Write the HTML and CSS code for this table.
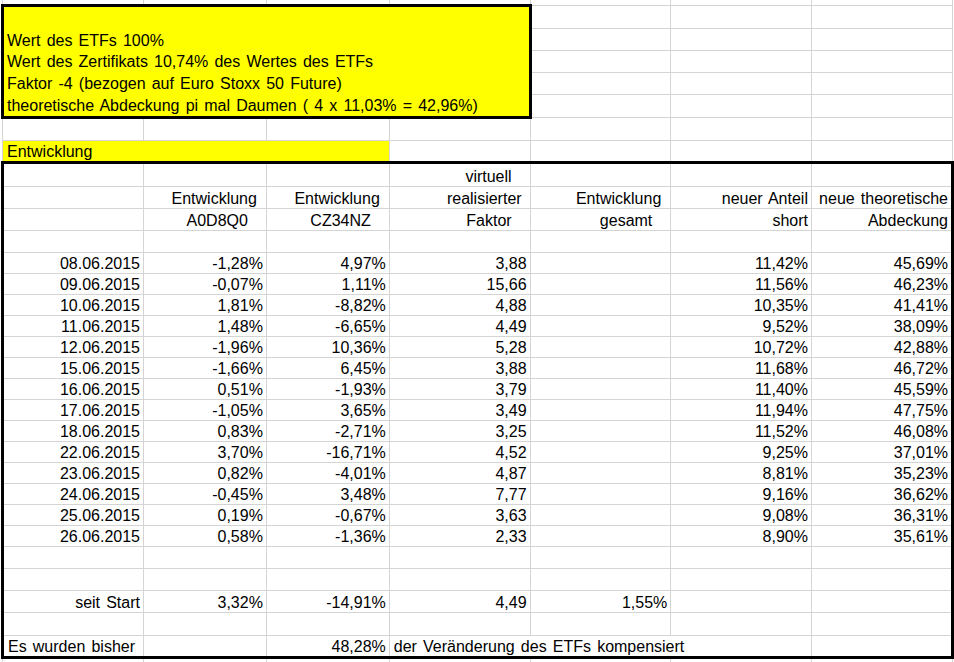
FILE: index.html
```html
<!DOCTYPE html>
<html lang="de">
<head>
<meta charset="utf-8">
<title>Entwicklung</title>
<link rel="stylesheet" href="styles.css">
</head>
<body>
<table class="sheet">
  <colgroup>
    <col class="c-a"><col class="c-b"><col class="c-b"><col class="c-w"><col class="c-w"><col class="c-w"><col class="c-w">
  </colgroup>
  <tbody class="upper">
    <tr class="r0"><td></td><td></td><td></td><td></td><td></td><td></td><td></td></tr>
    <tr class="h23">
      <td class="box" colspan="4" rowspan="5">
        <div class="ln">Wert des ETFs 100%</div>
        <div class="ln">Wert des Zertifikats 10,74% des Wertes des ETFs</div>
        <div class="ln">Faktor -4 (bezogen auf Euro Stoxx 50 Future)</div>
        <div class="ln">theoretische Abdeckung pi mal Daumen ( 4 x 11,03% = 42,96%)</div>
      </td>
      <td></td><td></td><td></td>
    </tr>
    <tr class="h22"><td></td><td></td><td></td></tr>
    <tr class="h22"><td></td><td></td><td></td></tr>
    <tr class="h22"><td></td><td></td><td></td></tr>
    <tr class="h23"><td></td><td></td><td></td></tr>
    <tr class="h23"><td></td><td></td><td></td><td></td><td></td><td></td><td></td></tr>
    <tr class="h22"><td class="band" colspan="3">Entwicklung</td><td></td><td></td><td></td><td></td></tr>
  </tbody>
  <tbody class="frame">
    <tr class="h24 first"><td></td><td></td><td></td><td class="p18">virtuell</td><td></td><td></td><td></td></tr>
    <tr class="h22"><td></td><td class="p9">Entwicklung</td><td class="p9">Entwicklung</td><td class="p8">realisierter</td><td class="p9">Entwicklung</td><td>neuer Anteil</td><td>neue theoretische</td></tr>
    <tr class="h22"><td></td><td class="p18">A0D8Q0</td><td class="p18">CZ34NZ</td><td class="p18">Faktor</td><td class="p18">gesamt</td><td>short</td><td>Abdeckung</td></tr>
    <tr class="h22"><td></td><td></td><td></td><td></td><td></td><td></td><td></td></tr>
    <tr class="h21"><td>08.06.2015</td><td>-1,28%</td><td>4,97%</td><td>3,88</td><td></td><td>11,42%</td><td>45,69%</td></tr>
    <tr class="h21"><td>09.06.2015</td><td>-0,07%</td><td>1,11%</td><td>15,66</td><td></td><td>11,56%</td><td>46,23%</td></tr>
    <tr class="h21"><td>10.06.2015</td><td>1,81%</td><td>-8,82%</td><td>4,88</td><td></td><td>10,35%</td><td>41,41%</td></tr>
    <tr class="h21"><td>11.06.2015</td><td>1,48%</td><td>-6,65%</td><td>4,49</td><td></td><td>9,52%</td><td>38,09%</td></tr>
    <tr class="h21"><td>12.06.2015</td><td>-1,96%</td><td>10,36%</td><td>5,28</td><td></td><td>10,72%</td><td>42,88%</td></tr>
    <tr class="h21"><td>15.06.2015</td><td>-1,66%</td><td>6,45%</td><td>3,88</td><td></td><td>11,68%</td><td>46,72%</td></tr>
    <tr class="h21"><td>16.06.2015</td><td>0,51%</td><td>-1,93%</td><td>3,79</td><td></td><td>11,40%</td><td>45,59%</td></tr>
    <tr class="h21"><td>17.06.2015</td><td>-1,05%</td><td>3,65%</td><td>3,49</td><td></td><td>11,94%</td><td>47,75%</td></tr>
    <tr class="h21"><td>18.06.2015</td><td>0,83%</td><td>-2,71%</td><td>3,25</td><td></td><td>11,52%</td><td>46,08%</td></tr>
    <tr class="h21"><td>22.06.2015</td><td>3,70%</td><td>-16,71%</td><td>4,52</td><td></td><td>9,25%</td><td>37,01%</td></tr>
    <tr class="h21"><td>23.06.2015</td><td>0,82%</td><td>-4,01%</td><td>4,87</td><td></td><td>8,81%</td><td>35,23%</td></tr>
    <tr class="h21"><td>24.06.2015</td><td>-0,45%</td><td>3,48%</td><td>7,77</td><td></td><td>9,16%</td><td>36,62%</td></tr>
    <tr class="h21"><td>25.06.2015</td><td>0,19%</td><td>-0,67%</td><td>3,63</td><td></td><td>9,08%</td><td>36,31%</td></tr>
    <tr class="h21"><td>26.06.2015</td><td>0,58%</td><td>-1,36%</td><td>2,33</td><td></td><td>8,90%</td><td>35,61%</td></tr>
    <tr class="h22"><td></td><td></td><td></td><td></td><td></td><td></td><td></td></tr>
    <tr class="h22"><td></td><td></td><td></td><td></td><td></td><td></td><td></td></tr>
    <tr class="h22"><td>seit Start</td><td>3,32%</td><td>-14,91%</td><td>4,49</td><td>1,55%</td><td></td><td></td></tr>
    <tr class="h23"><td></td><td></td><td></td><td></td><td></td><td></td><td></td></tr>
    <tr class="h22 last"><td class="left">Es wurden bisher</td><td></td><td>48,28%</td><td class="left" colspan="3">der Veränderung des ETFs kompensiert</td><td></td></tr>
  </tbody>
  <tbody class="lower">
    <tr class="rend"><td></td><td></td><td></td><td></td><td></td><td></td><td></td></tr>
  </tbody>
</table>
</body>
</html>
```

FILE: styles.css
```css
html, body {
  margin: 0;
  padding: 0;
  background: #ffffff;
  overflow: hidden;
}

.sheet {
  border-collapse: collapse;
  table-layout: fixed;
  margin-left: 1px;
  font-family: "Liberation Sans", Arial, sans-serif;
  font-size: 16px;
  line-height: 17px;
  word-spacing: 1.7px;
  color: #000000;
}

.c-a { width: 141px; }
.c-b { width: 123px; }
.c-w { width: 141px; }

.sheet td {
  border: 1px solid #d4d4d4;
  padding: 0 3px 1px 3px;
  vertical-align: bottom;
  text-align: right;
  white-space: nowrap;
  overflow: hidden;
}

.r0 { height: 5px; }
.r0 td { border-top: none; }
.h21 { height: 21px; }
.h22 { height: 22px; }
.h23 { height: 23px; }
.h24 { height: 24px; }
.rend { height: 6px; }
.rend td { border-bottom: none; }

.sheet td.box {
  background: #ffff00;
  border: 3px solid #000000;
  vertical-align: top;
  text-align: left;
  padding: 23px 3px 0 3px;
}

.box .ln {
  line-height: 21.7px;
}

.sheet td.band {
  background: #ffff00;
  text-align: left;
  padding-left: 4px;
}

.frame tr.first td { border-top: 3px solid #000000; }
.frame tr.last td { border-bottom: 3px solid #000000; }
.frame td:first-child { border-left: 3px solid #000000; }
.frame td:last-child { border-right: 3px solid #000000; }

.sheet td.left { text-align: left; padding-left: 4px; }
.sheet td.p8 { padding-right: 8px; }
.sheet td.p9 { padding-right: 9px; }
.sheet td.p18 { padding-right: 18px; }
```
